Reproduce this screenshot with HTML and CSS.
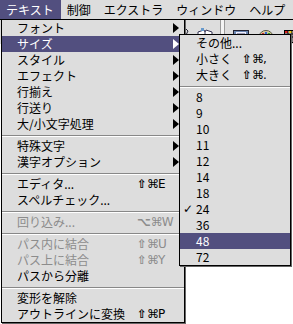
FILE: index.html
```html
<!DOCTYPE html>
<html>

<head>
    <meta charset="utf-8">
    <title>テキスト メニュー</title>
    <link rel="stylesheet" href="styles.css">
</head>

<body>
    <div class="menubar">
        <span class="title active">テキスト</span>
        <span class="title">制御</span>
        <span class="title">エクストラ</span>
        <span class="title">ウィンドウ</span>
        <span class="title">ヘルプ</span>
    </div>
    <div class="toolbar">
        <svg class="tool tip" width="4" height="8" viewBox="0 0 4 8"><path d="M0 0 L3 3 L1 7" stroke="#223" fill="none"/></svg>
        <svg class="tool book" width="16" height="16" viewBox="0 0 16 16">
            <path d="M1 4 L7 2 L8 4 L9 2 L15 4 L15 14 L8 15 L1 14 Z" fill="#fff" stroke="#335" />
            <path d="M8 4 L8 15" stroke="#335" />
            <rect x="4" y="0" width="3" height="3" fill="#69c" />
        </svg>
        <span class="tool bar"></span>
        <svg class="tool doc" width="16" height="16" viewBox="0 0 16 16">
            <rect x="0.5" y="2.5" width="15" height="12" fill="#6a86b0" stroke="#223" />
            <rect x="3" y="4" width="10" height="8" fill="#eef" />
            <path d="M4 6 H12 M4 8 H12 M4 10 H10" stroke="#446" />
        </svg>
        <svg class="tool palette" width="14" height="16" viewBox="0 0 14 16">
            <ellipse cx="7" cy="8" rx="6.5" ry="5.5" fill="#e8d9a0" stroke="#554" />
            <circle cx="4" cy="6" r="1.3" fill="#c33" />
            <circle cx="7" cy="5" r="1.3" fill="#36c" />
            <circle cx="10" cy="6" r="1.3" fill="#3a3" />
        </svg>
        <svg class="tool grid" width="12" height="16" viewBox="0 0 12 16">
            <rect x="0.5" y="2.5" width="14" height="12" fill="#fff" stroke="#000" />
            <rect x="1" y="3" width="3" height="2" fill="#d22" />
            <rect x="5" y="3" width="3" height="2" fill="#ec2" />
            <rect x="9" y="3" width="3" height="2" fill="#24c" />
            <path d="M0 6 H12 M0 9 H12 M4 3 V15 M8 3 V15" stroke="#000" />
        </svg>
    </div>

    <ul class="menu main">
        <li class="item"><span class="label">フォント</span><span class="key"></span><span class="arrow"></span></li>
        <li class="item hilite"><span class="label">サイズ</span><span class="key"></span><span class="arrow"></span></li>
        <li class="item"><span class="label">スタイル</span><span class="key"></span><span class="arrow"></span></li>
        <li class="item"><span class="label">エフェクト</span><span class="key"></span><span class="arrow"></span></li>
        <li class="item"><span class="label">行揃え</span><span class="key"></span><span class="arrow"></span></li>
        <li class="item"><span class="label">行送り</span><span class="key"></span><span class="arrow"></span></li>
        <li class="item"><span class="label">大/小文字処理</span><span class="key"></span><span class="arrow"></span></li>
        <li class="sep"></li>
        <li class="item"><span class="label">特殊文字</span><span class="key"></span><span class="arrow"></span></li>
        <li class="item"><span class="label">漢字オプション</span><span class="key"></span><span class="arrow"></span></li>
        <li class="sep"></li>
        <li class="item"><span class="label">エディタ...</span><span class="key"><b>⇧</b>⌘E</span></li>
        <li class="item"><span class="label">スペルチェック...</span><span class="key"></span></li>
        <li class="sep"></li>
        <li class="item off"><span class="label">回り込み...</span><span class="key"><b>⌥</b>⌘W</span></li>
        <li class="sep"></li>
        <li class="item off"><span class="label">パス内に結合</span><span class="key"><b>⇧</b>⌘U</span></li>
        <li class="item off"><span class="label">パス上に結合</span><span class="key"><b>⇧</b>⌘Y</span></li>
        <li class="item"><span class="label">パスから分離</span><span class="key"></span></li>
        <li class="sep"></li>
        <li class="item"><span class="label">変形を解除</span><span class="key"></span></li>
        <li class="item"><span class="label">アウトラインに変換</span><span class="key"><b>⇧</b>⌘P</span></li>
    </ul>

    <ul class="menu size">
        <li class="item"><span class="mark"></span><span class="label">その他...</span><span class="key"></span></li>
        <li class="item"><span class="mark"></span><span class="label">小さく</span><span class="key"><b>⇧</b>⌘,</span></li>
        <li class="item"><span class="mark"></span><span class="label">大きく</span><span class="key"><b>⇧</b>⌘.</span></li>
        <li class="sep"></li>
        <li class="item"><span class="mark"></span><span class="label">8</span></li>
        <li class="item"><span class="mark"></span><span class="label">9</span></li>
        <li class="item"><span class="mark"></span><span class="label">10</span></li>
        <li class="item"><span class="mark"></span><span class="label">11</span></li>
        <li class="item"><span class="mark"></span><span class="label">12</span></li>
        <li class="item"><span class="mark"></span><span class="label">14</span></li>
        <li class="item"><span class="mark"></span><span class="label">18</span></li>
        <li class="item"><span class="mark">✓</span><span class="label">24</span></li>
        <li class="item"><span class="mark"></span><span class="label">36</span></li>
        <li class="item hilite"><span class="mark"></span><span class="label">48</span></li>
        <li class="item"><span class="mark"></span><span class="label">72</span></li>
    </ul>
</body>

</html>
```

FILE: styles.css
```css
html,
body {
    margin: 0;
    padding: 0;
    width: 100%;
    height: 100%;
}

body {
    position: relative;
    background-color: #fff;
    color: #000;
    font-family: "Noto Sans CJK JP", "DejaVu Sans", sans-serif;
    font-size: 12px;
    overflow: hidden;
}

.menubar {
    display: flex;
    height: 19px;
    line-height: 19px;
    background-color: #ddd;
    border-bottom: 1px solid #000;
}

.title {
    padding: 0 7px 0 6px;
    white-space: nowrap;
}

.title.active {
    background-color: #524f7f;
    color: #fff;
}

.toolbar {
    display: flex;
    align-items: flex-start;
    height: 24px;
    padding: 8px 0 0 185px;
    box-sizing: border-box;
    background-color: #ddd;
}

.tool {
    flex: none;
}

.tool.book {
    margin-left: 8px;
}

.tool.bar {
    width: 3px;
    height: 16px;
    margin: -8px 0 0 7px;
    background-color: #f4f4f4;
    border: 1px solid #999;
    border-top: none;
}

.tool.doc {
    margin-left: 8px;
}

.tool.palette {
    margin-left: 10px;
}

.tool.grid {
    margin-left: 11px;
}

.menu {
    position: absolute;
    margin: 0;
    padding: 0;
    list-style: none;
    box-sizing: border-box;
    background-color: #ddd;
    border: 1px solid #000;
    box-shadow: 1px 1px 0 #666;
}

.menu.main {
    left: 1px;
    top: 19px;
    width: 184px;
}

.menu.size {
    left: 179px;
    top: 34px;
    width: 112px;
}

.item {
    display: grid;
    align-items: center;
    height: 16px;
    line-height: 16px;
    white-space: nowrap;
}

.main .item {
    grid-template-columns: 120px 36px 6px;
    padding-left: 15px;
}

.size .item {
    grid-template-columns: 16px 46px auto;
}

.item.hilite {
    background-color: #524f7f;
    color: #fff;
}

.item.off {
    color: #8c8c8c;
}

.key {
    font-family: "DejaVu Sans", "Noto Sans CJK JP", sans-serif;
    font-size: 12px;
    letter-spacing: -1px;
}

.key b {
    margin-right: 1px;
}

.mark {
    font-family: "DejaVu Sans", sans-serif;
    font-size: 12px;
    padding-left: 3px;
}

.arrow {
    width: 0;
    height: 0;
    border-left: 6px solid #000;
    border-top: 5px solid transparent;
    border-bottom: 5px solid transparent;
}

.hilite .arrow {
    border-left-color: #fff;
}

.sep {
    height: 1px;
    margin: 3px 0 1px;
    border-top: 1px solid #888;
    background-color: #fff;
}
```
